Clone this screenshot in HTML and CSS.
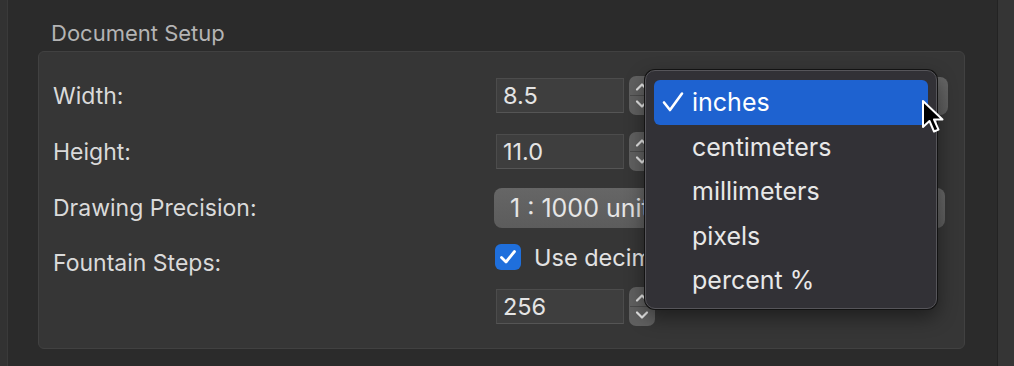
FILE: index.html
```html
<!DOCTYPE html>
<html lang="en">

<head>
    <meta charset="utf-8">
    <title>Document Setup</title>
    <link rel="stylesheet" href="styles.css">
</head>

<body>
    <div class="window">
        <div class="side-left"></div>

        <div class="panel">
            <div class="group-title">Document Setup</div>

            <div class="group">
                <div class="label">Width:</div>
                <div class="controls">
                    <div class="field">8.5</div>
                    <div class="stepper"></div>
                    <div class="popup units">inches</div>
                </div>

                <div class="label">Height:</div>
                <div class="controls">
                    <div class="field">11.0</div>
                    <div class="stepper"></div>
                </div>

                <div class="label">Drawing Precision:</div>
                <div class="controls">
                    <div class="popup precision">1 : 1000 units per inch</div>
                </div>

                <div class="label label-low">Fountain Steps:</div>
                <div class="controls check-row">
                    <div class="checkbox">
                        <svg width="18" height="16" viewBox="0 0 18 16">
                            <path d="M2.5 8.5 L7 13 L15.5 2.5" fill="none" stroke="#fff" stroke-width="2.8" stroke-linecap="round" stroke-linejoin="round" />
                        </svg>
                    </div>
                    <div class="check-label">Use decimal places</div>
                </div>

                <div class="label"></div>
                <div class="controls">
                    <div class="field">256</div>
                    <div class="stepper"></div>
                </div>
            </div>
        </div>

        <div class="side-right"></div>
    </div>

    <!-- units menu opened from the Width popup -->
    <div class="menu">
        <div class="menu-item selected">
            <svg class="tick" width="22" height="22" viewBox="0 0 22 22">
                <path d="M2 11.5 L8 19 L20 2.5" fill="none" stroke="#fff" stroke-width="2.6" stroke-linecap="round" stroke-linejoin="round" />
            </svg>inches
        </div>
        <div class="menu-item">centimeters</div>
        <div class="menu-item">millimeters</div>
        <div class="menu-item">pixels</div>
        <div class="menu-item">percent %</div>
    </div>

    <svg class="cursor" width="30" height="38" viewBox="0 0 30 38">
        <path d="M2 2 L2 28 L8.5 22 L13 32.5 L17.5 30.6 L13 20.5 L21.5 20.5 Z" fill="#000" stroke="#fff" stroke-width="2" stroke-linejoin="round" />
    </svg>

    <script>
        // draw the stepper arrows
        for (let st of document.querySelectorAll(".stepper")) {
            st.innerHTML = `
                <svg width="26" height="39" viewBox="0 0 26 39">
                    <path d="M8 13.5 L13 8.5 L18 13.5" fill="none" stroke="#e4e4e4" stroke-width="2.2" stroke-linecap="round" stroke-linejoin="round" />
                    <line x1="1" y1="19.5" x2="25" y2="19.5" stroke="#4a4a4a" stroke-width="1" />
                    <path d="M8 25.5 L13 30.5 L18 25.5" fill="none" stroke="#e4e4e4" stroke-width="2.2" stroke-linecap="round" stroke-linejoin="round" />
                </svg>`;
        }
    </script>
</body>

</html>
```

FILE: styles.css
```css
html {
    font-family: 'Inter', 'Noto Sans', sans-serif;
}

body {
    margin: 0px;
    width: 1014px;
    height: 366px;
    overflow: hidden;
    background-color: #2b2b2b;
    position: relative;
}

.window {
    display: flex;
    height: 366px;
}

.side-left {
    width: 7px;
    background-color: #323232;
    border-right: 1px solid #3a3a3a;
}

.side-right {
    width: 16px;
    background-color: #353535;
    border-left: 1px solid #232323;
}

.panel {
    flex: 1;
    padding: 20px 0px 0px 30px;
}

.group-title {
    font-size: 22px;
    line-height: 26px;
    color: #b4b4b4;
    padding-left: 13px;
    margin-bottom: 5px;
}

.group {
    width: 927px;
    height: 298px;
    box-sizing: border-box;
    background-color: #363636;
    border: 1px solid #414141;
    border-radius: 6px;
    padding: 24px 0px 0px 14px;
    display: grid;
    grid-template-columns: 441px 1fr;
    align-content: start;
    row-gap: 17px;
    align-items: center;
}

.label {
    font-size: 23px;
    line-height: 28px;
    color: #dadada;
}

/* sits a little below the checkbox it labels */
.label-low {
    line-height: 14px;
    margin-top: 12px;
}

.controls {
    display: flex;
    align-items: center;
    height: 39px;
}

.check-row {
    height: 26px;
}

.field {
    width: 128px;
    height: 35px;
    box-sizing: border-box;
    margin-left: 2px;
    padding-left: 6px;
    background-color: #3e3e3e;
    border: 1px solid #4c4c4c;
    border-bottom-color: #555555;
    font-size: 23.5px;
    line-height: 33px;
    color: #e4e4e4;
}

.stepper {
    width: 26px;
    height: 39px;
    margin-left: 5px;
    border-radius: 7px;
    background-color: #606060;
}

.stepper svg {
    display: block;
}

.popup {
    height: 40px;
    box-sizing: border-box;
    border-radius: 8px;
    background: linear-gradient(#666666, #5c5c5c);
    font-size: 25px;
    line-height: 40px;
    color: #e6e6e6;
    padding-left: 16px;
    white-space: nowrap;
    overflow: hidden;
}

.units {
    width: 288px;
    height: 38px;
    margin-left: 5px;
}

.precision {
    width: 451px;
}

.checkbox {
    width: 26px;
    height: 26px;
    margin-left: 1px;
    border-radius: 6px;
    background-color: #1f6fdc;
    display: flex;
    align-items: center;
    justify-content: center;
}

.check-label {
    margin-left: 13px;
    font-size: 23.5px;
    color: #e2e2e2;
    white-space: nowrap;
}

.menu {
    position: absolute;
    left: 645px;
    top: 70px;
    width: 292px;
    height: 239px;
    box-sizing: border-box;
    padding: 9px 8px 0px;
    border-radius: 10px;
    background-color: #323136;
    border: 1px solid #56555a;
    box-shadow: 0px 0px 0px 1px #131313, 0px 8px 20px rgba(0, 0, 0, 0.45);
}

.menu-item {
    height: 44.5px;
    border-radius: 6px;
    padding-left: 38px;
    position: relative;
    font-size: 25px;
    line-height: 44px;
    color: #e8e8e8;
}

.menu-item.selected {
    background-color: #1e62d0;
    color: #ffffff;
}

.tick {
    position: absolute;
    left: 8px;
    top: 11px;
}

.cursor {
    position: absolute;
    left: 921px;
    top: 99px;
}
```
